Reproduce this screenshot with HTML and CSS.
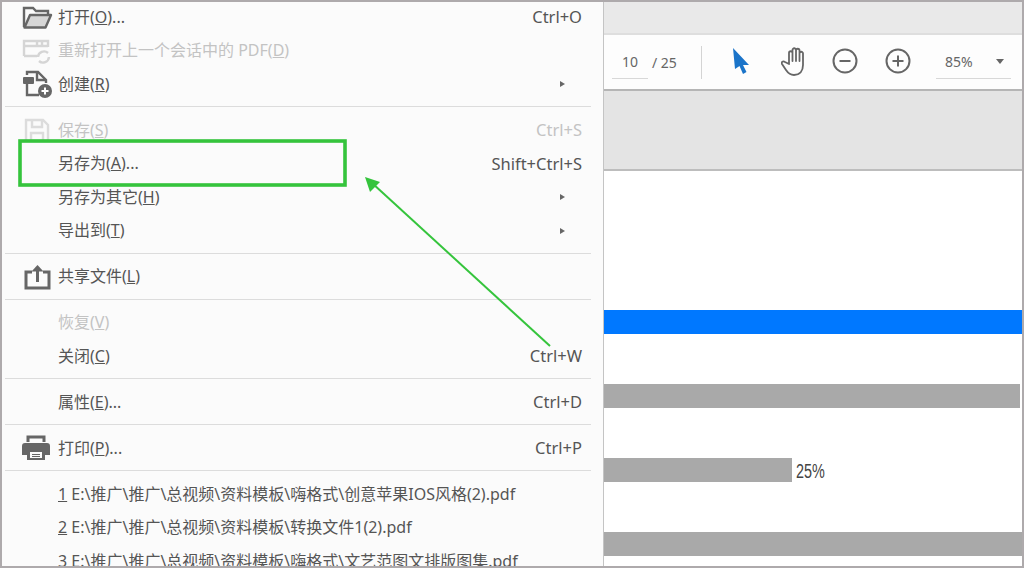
FILE: index.html
```html
<!DOCTYPE html>
<html lang="zh-CN">
<head>
<meta charset="utf-8">
<title>另存为</title>
<link rel="stylesheet" href="styles.css">
</head>
<body>
<div class="frame">
  <nav class="menu">
    <div class="row first">
      <span class="ico"><svg width="32" height="26" viewBox="0 0 32 26"><path d="M2 23V4h9l3 3h12v4" fill="none" stroke="#666" stroke-width="2.4"/><path d="M2.500 23.500 8 11h21l-5.500 12.500z" fill="#d6d6d6" stroke="#666" stroke-width="2.400" stroke-linejoin="round"/></svg></span>
      <span class="label">打开(<u>O</u>)...</span><span class="key">Ctrl+O</span>
    </div>
    <div class="row off">
      <span class="ico"><svg width="32" height="26" viewBox="0 0 32 26"><path d="M2 18V3h24v6M2 8h24M15 3v5M20 3v5M2 18h13" fill="none" stroke="#d5d5d5" stroke-width="2.400"/><path d="M16 19a6 6 0 0 1 10-4M27 19a6 6 0 0 1-10 4" fill="none" stroke="#d5d5d5" stroke-width="2.400"/></svg></span>
      <span class="label">重新打开上一个会话中的 PDF(<u>D</u>)</span>
    </div>
    <div class="row">
      <span class="ico"><svg width="32" height="28" viewBox="0 0 32 28"><path d="M5 5V2h11l8 8v3" fill="none" stroke="#666" stroke-width="2.400"/><path d="M15 2v8h9" fill="none" stroke="#666" stroke-width="2.400"/><rect x="1" y="7" width="11" height="7" rx="1" fill="#666"/><path d="M5 14v11h12" fill="none" stroke="#666" stroke-width="2.400"/><circle cx="23" cy="21" r="7" fill="#666"/><path d="M23 17.500v7M19.500 21h7" stroke="#fff" stroke-width="2"/></svg></span>
      <span class="label">创建(<u>R</u>)</span><span class="more"></span>
    </div>
    <hr class="sep">
    <div class="row off">
      <span class="ico"><svg width="32" height="24" viewBox="0 0 32 24"><path d="M4 2h17l5 5v16H4z" fill="none" stroke="#dcdcdc" stroke-width="2.400"/><path d="M10 2v7h10V2M9 23v-8h12v8" fill="none" stroke="#dcdcdc" stroke-width="2.400"/></svg></span>
      <span class="label">保存(<u>S</u>)</span><span class="key">Ctrl+S</span>
    </div>
    <div class="row">
      <span class="ico"></span>
      <span class="label">另存为(<u>A</u>)...</span><span class="key">Shift+Ctrl+S</span>
    </div>
    <div class="row">
      <span class="ico"></span>
      <span class="label">另存为其它(<u>H</u>)</span><span class="more"></span>
    </div>
    <div class="row">
      <span class="ico"></span>
      <span class="label">导出到(<u>T</u>)</span><span class="more"></span>
    </div>
    <hr class="sep">
    <div class="row">
      <span class="ico"><svg width="32" height="26" viewBox="0 0 32 26"><path d="M10 8H4v16h23V8h-6" fill="none" stroke="#666" stroke-width="3"/><path d="M15.500 18V4" stroke="#666" stroke-width="3"/><path d="M9.500 7.500 15.500 1l6 6.500z" fill="#666"/></svg></span>
      <span class="label">共享文件(<u>L</u>)</span>
    </div>
    <hr class="sep">
    <div class="row off">
      <span class="ico"></span>
      <span class="label">恢复(<u>V</u>)</span>
    </div>
    <div class="row">
      <span class="ico"></span>
      <span class="label">关闭(<u>C</u>)</span><span class="key">Ctrl+W</span>
    </div>
    <hr class="sep">
    <div class="row">
      <span class="ico"></span>
      <span class="label">属性(<u>E</u>)...</span><span class="key">Ctrl+D</span>
    </div>
    <hr class="sep">
    <div class="row">
      <span class="ico"><svg width="30" height="26" viewBox="0 0 30 26"><path d="M6 7V2h16v5" fill="none" stroke="#666" stroke-width="3"/><path d="M3 8h22a3 3 0 0 1 3 3v9h-5v-5H5v5H0v-9a3 3 0 0 1 3-3z" fill="#666"/><path d="M5 14h18v11H5z" fill="#666"/><path d="M8 17h12v6H8z" fill="#fbfbfb"/><path d="M10 19.500h8M10 21.500h8" stroke="#666" stroke-width="1"/></svg></span>
      <span class="label">打印(<u>P</u>)...</span><span class="key">Ctrl+P</span>
    </div>
    <hr class="sep">
    <div class="row"><span class="ico"></span><span class="label"><u>1</u> E:\推广\推广\总视频\资料模板\嗨格式\创意苹果IOS风格(2).pdf</span></div>
    <div class="row"><span class="ico"></span><span class="label"><u>2</u> E:\推广\推广\总视频\资料模板\转换文件1(2).pdf</span></div>
    <div class="row"><span class="ico"></span><span class="label"><u>3</u> E:\推广\推广\总视频\资料模板\嗨格式\文艺范图文排版图集.pdf</span></div>
  </nav>
  <main class="viewer">
    <div class="tabbar"></div>
    <div class="toolbar">
      <span class="field page">10</span>
      <span class="total">/ 25</span>
      <span class="divider"></span>
      <svg class="tool cursor" width="18" height="26" viewBox="0 0 18 26"><path d="M1 0 17 17h-6l3.500 7-3.500 2-3.500-8L3 21z" fill="#1b74c9"/></svg>
      <svg class="tool hand" width="28" height="30" viewBox="0 0 28 30"><path d="M8 17V6a1.700 1.700 0 0 1 3.500 0v8-11a1.700 1.700 0 0 1 3.500 0v11V3.500a1.700 1.700 0 0 1 3.500 0V14 6.500a1.700 1.700 0 0 1 3.500 0V18c0 6-3 10-9 10-4 0-6-2-8-5l-4-6c-1-2 1-3.500 3-2z" fill="none" stroke="#666" stroke-width="1.800" stroke-linejoin="round"/></svg>
      <svg class="tool circle" width="26" height="26" viewBox="0 0 26 26"><circle cx="13" cy="13" r="11.500" fill="none" stroke="#666" stroke-width="2"/><path d="M7.500 13h11" stroke="#666" stroke-width="2"/></svg>
      <svg class="tool circle plus" width="26" height="26" viewBox="0 0 26 26"><circle cx="13" cy="13" r="11.500" fill="none" stroke="#666" stroke-width="2"/><path d="M7.500 13h11M13 7.500v11" stroke="#666" stroke-width="2"/></svg>
      <span class="field zoom"><span>85%</span><i class="caret"></i></span>
    </div>
    <div class="band"></div>
    <div class="doc">
      <div class="bar blue"></div>
      <div class="bar grey almost"></div>
      <div class="bar-row"><div class="bar grey quarter"></div><span class="pct">25%</span></div>
      <div class="bar grey"></div>
    </div>
  </main>
  <svg class="note" width="1024" height="568" viewBox="0 0 1024 568">
    <rect x="20" y="141" width="325" height="44" fill="none" stroke="#35c43c" stroke-width="3.600"/>
    <path d="M550 346 372 183" stroke="#35c43c" stroke-width="2" fill="none"/>
    <path d="M365 177 380 182 370 192z" fill="#35c43c"/>
  </svg>
</div>
</body>
</html>
```
FILE: styles.css
```css
* { box-sizing: border-box; }
html, body { margin: 0; padding: 0; }
body { width: 1024px; height: 568px; overflow: hidden; background: #fff; font-family: "Noto Sans", "Noto Sans CJK SC", sans-serif; }
.frame { position: relative; width: 1024px; height: 568px; border: 2px solid #aeaaac; display: flex; overflow: hidden; }
.menu { width: 602px; flex: none; background: #fbfbfb; border-right: 1px solid #c4c4c4; color: #555; font-size: 16px; overflow: hidden; }
.row { height: 33.6px; display: flex; align-items: center; padding-right: 21px; white-space: nowrap; }
.row.first { margin-top: -1.8px; }
.row.off { color: #c3c3c3; }
.ico { width: 56px; flex: none; padding-left: 20px; display: flex; align-items: center; }
.ico svg { display: block; }
.label { flex: 1; padding-bottom: 3px; }
.key { font-size: 16.500px; padding-bottom: 1px; }
.more { width: 0; height: 0; margin-right: 17px; border-left: 5px solid #666; border-top: 3.500px solid transparent; border-bottom: 3.500px solid transparent; }
.sep { height: 1px; border: 0; margin: 5.200px 12px 6.200px 3px; background: #dcdcdc; }
.viewer { flex: 1; display: flex; flex-direction: column; min-width: 0; }
.tabbar { height: 33px; background: #e9e9e9; border-bottom: 2px solid #dedede; flex: none; }
.toolbar { height: 56px; flex: none; background: #fdfdfd; border-bottom: 2px solid #b5b5b5; display: flex; align-items: center; color: #666; font-size: 14px; }
.field { height: 34px; border-bottom: 1px solid #d8d8d8; display: flex; align-items: center; }
.page { width: 36px; margin-left: 8px; justify-content: center; }
.total { margin-left: 4px; width: 49px; }
.divider { width: 1px; height: 33px; background: #d4d4d4; }
.tool { flex: none; display: block; }
.cursor { margin-left: 30px; margin-bottom: 2px; }
.hand { margin-left: 31px; }
.circle { margin-left: 23px; margin-bottom: 2px; }
.plus { margin-left: 27px; }
.zoom { width: 75px; margin-left: 25px; padding-left: 9px; padding-right: 7px; justify-content: space-between; }
.caret { width: 0; height: 0; border-top: 5px solid #666; border-left: 4px solid transparent; border-right: 4px solid transparent; }
.band { height: 80px; flex: none; background: #e4e4e4; border-bottom: 2px solid #bdbdbd; }
.doc { flex: 1; background: #fff; padding-top: 139px; display: flex; flex-direction: column; gap: 50px; overflow: hidden; }
.bar { height: 24px; flex: none; }
.blue { background: #0078ff; }
.grey { background: #a9a9a9; }
.almost { margin-right: 2px; }
.bar-row { display: flex; align-items: center; gap: 4px; }
.quarter { width: 188px; }
.pct { font-family: "Liberation Sans", sans-serif; font-size: 20px; color: #444; transform: translateY(1px) scaleX(0.72); transform-origin: left center; }
.note { position: absolute; left: -2px; top: -2px; pointer-events: none; }
```
